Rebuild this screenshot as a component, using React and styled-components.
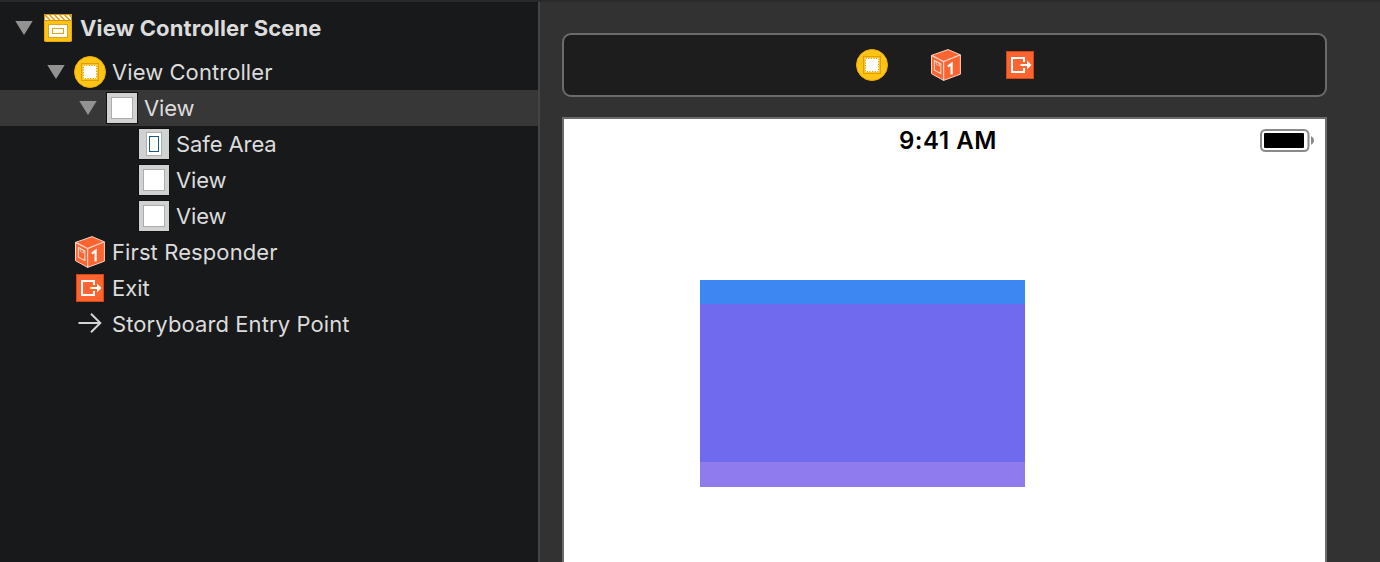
import React from "react";
import styled, { createGlobalStyle } from "styled-components";

const Global = createGlobalStyle`
  * { box-sizing: border-box; }
  body { margin: 0; overflow: hidden; background: #323232; }
  svg { display: block; flex: none; }
`;

const Window = styled.div`
  width: 1380px;
  height: 562px;
  display: flex;
  border-top: 2px solid #292a2b;
  background: #323232;
  overflow: hidden;
  font-family: Inter, "Liberation Sans", sans-serif;
`;

const Outline = styled.nav`
  width: 540px;
  flex: none;
  background: #18191b;
  border-right: 2px solid #434445;
`;

const Row = styled.div`
  display: flex;
  align-items: center;
  height: ${(p) => (p.$header ? 52 : 36)}px;
  padding-left: ${(p) => 8 + p.$depth * 32}px;
  background: ${(p) => (p.$selected ? "#373737" : "transparent")};
`;

const Disclosure = styled.span`
  width: 34px;
  flex: none;
  padding-left: 7px;
`;

const Label = styled.span`
  margin-left: 6px;
  font-size: 22px;
  line-height: 36px;
  white-space: nowrap;
  color: #dcdcdc;
  font-weight: ${(p) => (p.$bold ? 700 : 400)};
  letter-spacing: ${(p) => p.$track || 0}px;
`;

const Canvas = styled.main`
  flex: 1;
  display: flex;
  flex-direction: column;
  padding: 31px 53px 0 22px;
`;

const Dock = styled.div`
  height: 64px;
  flex: none;
  display: flex;
  align-items: center;
  justify-content: center;
  gap: 42px;
  padding-left: 3px;
  border: 2px solid #6b6b6b;
  border-radius: 9px;
  background: #1d1d1d;
`;

const Device = styled.section`
  flex: 1;
  margin-top: 20px;
  border: 2px solid #6b6b6b;
  border-bottom: 0;
  background: #fff;
`;

const StatusBar = styled.header`
  height: 44px;
  display: grid;
  grid-template-columns: 1fr auto 1fr;
  align-items: center;
  padding: 0 11px 0 18px;
`;

const Clock = styled.span`
  grid-column: 2;
  font-size: 24px;
  font-weight: 600;
  line-height: 44px;
  color: #000;
  white-space: nowrap;
  letter-spacing: 0.6px;
`;

const BatterySlot = styled.span`
  justify-self: end;
`;

const Stack = styled.div`
  width: 325px;
  margin: 117px 0 0 136px;
`;

const Band = styled.div`
  height: ${(p) => p.$height}px;
  background: ${(p) => p.$color};
`;

const Triangle = () => (
  <svg width="18" height="14" viewBox="0 0 18 14">
    <path d="M0.3 0H17.7L9 14Z" fill="#929292" />
  </svg>
);

const SceneIcon = () => (
  <svg width="32" height="32" viewBox="0 0 32 32">
    <path d="M2 2H30V28Q30 30 28 30H4Q2 30 2 28Z" fill="#fdc414" />
    <path d="M3 3H29V8H3Z" fill="#fff" />
    <path d="M3 3L8 8M7.6 3L12.6 8M12.6 3L17.6 8M17.6 3L22.6 8M22.6 3L27.6 8M27.4 3L29 4.6" stroke="#e39c12" strokeWidth="1.6" />
    <path d="M2.5 8.5V2.5H29.5V8.5Z" fill="none" stroke="#d99012" />
    <path d="M2.5 8V27.5Q2.5 29.5 4.5 29.5H27.5Q29.5 29.5 29.5 27.5V8" fill="none" stroke="#eba613" />
    <rect x="6.5" y="12.5" width="19" height="13" fill="#fff" stroke="#e0a020" />
    <rect x="10.5" y="16.5" width="11" height="5" fill="#fff" stroke="#e0a020" />
  </svg>
);

const ControllerIcon = () => (
  <svg width="32" height="32" viewBox="0 0 32 32">
    <circle cx="16" cy="16" r="15.5" fill="#fec514" stroke="#f0ab10" />
    <rect x="7.5" y="7.5" width="17" height="17" fill="#fdc414" stroke="#e29e10" />
    <rect x="9" y="9" width="14" height="14" fill="#fff" />
    <rect x="9.5" y="9.5" width="13" height="13" fill="none" stroke="#e29e10" strokeDasharray="1.3 1.3" />
  </svg>
);

const ViewIcon = ({ safe }) => (
  <svg width="32" height="32" viewBox="0 0 32 32">
    <rect x="0.5" y="0.5" width="31" height="31" fill="#d1d1d1" stroke="#101112" />
    {safe ? (
      <>
        <rect x="8.5" y="4.5" width="15" height="23" fill="#fff" stroke="#adadad" />
        <rect x="11.5" y="8.5" width="9" height="15" fill="#fff" stroke="#185a9d" />
      </>
    ) : (
      <rect x="5.5" y="5.5" width="21" height="21" fill="#fff" stroke="#adadad" />
    )}
  </svg>
);

const ResponderIcon = () => (
  <svg width="32" height="32" viewBox="0 0 32 32">
    <path d="M1.5 6.4L18 0.6L30.4 5.8V25.2L13.6 31.4L1.5 24.7Z" fill="#fc6530" stroke="#f6d2c5" strokeLinejoin="round" />
    <path d="M1.5 6.4L13.6 12.6L30.4 5.8M13.6 12.6V31.4" fill="none" stroke="#f8d9cf" strokeWidth="1.2" />
    <path d="M4.4 11.6L10.8 14.9V24.6L4.4 21.2Z" fill="none" stroke="#f6d2c5" strokeWidth="1.1" />
    <path d="M6.2 12.8L9.6 14.6V17L6.2 15.2Z" fill="none" stroke="#f6d2c5" strokeWidth="0.8" />
    <path d="M17.8 17.6L21.6 14.8V25.5" fill="none" stroke="#fff" strokeWidth="2.2" />
  </svg>
);

const ExitIcon = () => (
  <svg width="32" height="32" viewBox="0 0 32 32">
    <rect x="2.5" y="2.5" width="27" height="27" fill="#fc6530" stroke="#d34717" />
    <path d="M20 13V9H8V23H20V19" fill="none" stroke="#fff" strokeWidth="2" />
    <path d="M16.5 16H24" stroke="#fff" strokeWidth="2" />
    <path d="M23 11.6L27.4 16L23 20.4Z" fill="#fff" />
  </svg>
);

const EntryIcon = () => (
  <svg width="32" height="32" viewBox="0 0 32 32">
    <path d="M4.5 15H26M17 5.8L26.3 15L17 24.2" fill="none" stroke="#d4d4d4" strokeWidth="2" />
  </svg>
);

const Battery = () => (
  <svg width="54" height="24" viewBox="0 0 54 24">
    <rect x="1" y="1" width="47.5" height="21" rx="4.5" fill="#fff" stroke="#8a8a8a" strokeWidth="2" />
    <rect x="4" y="4" width="40" height="15" rx="1" fill="#000" />
    <path d="M51 7.2Q54 8.5 54 11.5Q54 14.5 51 15.8Z" fill="#8a8a8a" />
  </svg>
);

const rows = [
  { depth: 0, label: "View Controller Scene", Icon: SceneIcon, open: true, header: true, track: 0.12 },
  { depth: 1, label: "View Controller", Icon: ControllerIcon, open: true, track: 0.07 },
  { depth: 2, label: "View", Icon: ViewIcon, open: true, selected: true, track: -0.15 },
  { depth: 3, label: "Safe Area", Icon: ViewIcon, safe: true, track: -0.1 },
  { depth: 3, label: "View", Icon: ViewIcon, track: -0.15 },
  { depth: 3, label: "View", Icon: ViewIcon, track: -0.15 },
  { depth: 1, label: "First Responder", Icon: ResponderIcon, track: 0.1 },
  { depth: 1, label: "Exit", Icon: ExitIcon },
  { depth: 1, label: "Storyboard Entry Point", Icon: EntryIcon, track: 0.1 },
];

export default function App() {
  return (
    <>
      <Global />
      <Window>
        <Outline>
          {rows.map(({ depth, label, Icon, open, header, selected, safe, track }, i) => (
            <Row key={i} $depth={depth} $header={header} $selected={selected}>
              <Disclosure>{open && <Triangle />}</Disclosure>
              <Icon safe={safe} />
              <Label $bold={header} $track={track}>{label}</Label>
            </Row>
          ))}
        </Outline>
        <Canvas>
          <Dock>
            <ControllerIcon />
            <ResponderIcon />
            <ExitIcon />
          </Dock>
          <Device>
            <StatusBar>
              <Clock>9:41 AM</Clock>
              <BatterySlot><Battery /></BatterySlot>
            </StatusBar>
            <Stack>
              <Band $height={24} $color="#3d87f3" />
              <Band $height={158} $color="#706aee" />
              <Band $height={25} $color="#8f7aee" />
            </Stack>
          </Device>
        </Canvas>
      </Window>
    </>
  );
}
